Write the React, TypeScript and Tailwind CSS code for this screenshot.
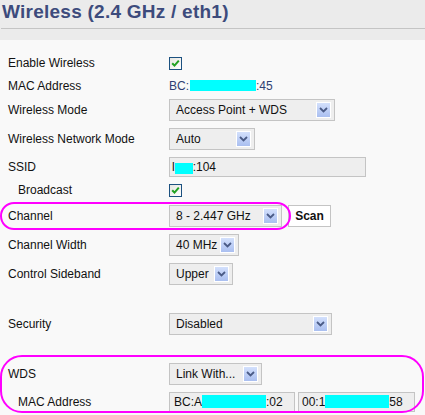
import React from "react";

const Arrow = () => (
    <span className="flex h-[16px] w-[15px] items-center justify-center border border-white bg-linear-to-b from-[#d3e0fc] to-[#aabff0]">
        <svg width="9" height="6" viewBox="0 0 9 6">
            <path d="M1 1 L4.5 4.5 L8 1" fill="none" stroke="#4a5b86" strokeWidth="1.8" />
        </svg>
    </span>
);

const Select = ({ value, className }: { value: string; className: string }) => (
    <div className={"flex h-[22px] items-center justify-between border border-[#c4c4c4] bg-[#eeeeee] pl-[6px] pr-[3px] " + className}>
        <span className="whitespace-nowrap">{value}</span>
        <Arrow />
    </div>
);

const Checkbox = () => (
    <span className="flex h-[13px] w-[13px] items-center justify-center border border-[#1c5180] bg-linear-to-br from-[#e6e6e0] to-[#ffffff]">
        <svg width="9" height="9" viewBox="0 0 9 9">
            <path d="M1.2 4.2 L3.5 6.6 L7.8 1.6" fill="none" stroke="#21a121" strokeWidth="2" />
        </svg>
    </span>
);

const Blot = ({ className }: { className: string }) => (
    <span className={"inline-block bg-[#00ffff] " + className} />
);

const Row = ({ label, indent, className, children }: { label: string; indent?: boolean; className: string; children?: React.ReactNode }) => (
    <div className={"flex items-center " + className}>
        <div className={"w-[169px] shrink-0 " + (indent ? "pl-[18px]" : "pl-[8px]")}>{label}</div>
        <div className="flex items-center gap-[6px]">{children}</div>
    </div>
);

export default function App() {
    return (
        <div className="w-[425px] h-[415px] overflow-hidden bg-[#f9f9f9] font-['Liberation_Sans',Arial,sans-serif] text-[12px] text-[#111]">
            <div className="bg-[#ebebeb]">
                <div className="h-[28px] pl-[2px] pt-[2px] text-[19px] leading-[19px] font-bold tracking-[0.25px] text-[#3d4b7c] whitespace-nowrap">
                    Wireless (2.4 GHz / eth1)
                </div>
                <div className="ml-[1px] h-[1px] bg-[#c4c4c4]" />
                <div className="h-[11px]" />
            </div>
            <div className="pt-[12px]">
                <Row label="Enable Wireless" className="h-[22px]"><Checkbox /></Row>
                <Row label="MAC Address" className="h-[23px]">
                    <span className="flex items-center text-[#2f3f72]">
                        BC:<Blot className="ml-[1px] h-[11px] w-[66px]" />:45
                    </span>
                </Row>
                <Row label="Wireless Mode" className="h-[26px]"><Select value="Access Point + WDS" className="w-[166px]" /></Row>
                <Row label="Wireless Network Mode" className="h-[32px]"><Select value="Auto" className="w-[86px]" /></Row>
                <Row label="SSID" className="h-[23px]">
                    <div className="flex h-[20px] w-[197px] items-center border border-[#c4c4c4] bg-[#eeeeee] pl-[2px]">
                        l<Blot className="mt-[3px] h-[11px] w-[18px]" />:104
                    </div>
                </Row>
                <Row label="Broadcast" indent className="h-[24px]"><Checkbox /></Row>
                <div className="relative">
                    <Row label="Channel" className="h-[28px]">
                        <Select value="8 - 2.447 GHz" className="w-[113px]" />
                        <div className="flex h-[22px] w-[43px] items-center justify-center border border-[#c4c4c4] bg-white font-bold">Scan</div>
                    </Row>
                    <span className="absolute left-0 top-0 h-[28px] w-[291px] rounded-[14px] border-2 border-[#ff00ff]" />
                </div>
                <Row label="Channel Width" className="h-[30px]"><Select value="40 MHz" className="w-[70px]" /></Row>
                <Row label="Control Sideband" className="h-[28px]"><Select value="Upper" className="w-[64px]" /></Row>
                <div className="h-[22px]" />
                <Row label="Security" className="h-[28px]"><Select value="Disabled" className="w-[163px]" /></Row>
                <div className="h-[22px]" />
                <div className="relative">
                    <Row label="WDS" className="h-[28px]"><Select value="Link With..." className="w-[93px]" /></Row>
                    <Row label="MAC Address" indent className="h-[27px]">
                        <div className="-mr-[3px] flex h-[20px] w-[126px] items-center border border-[#c4c4c4] bg-[#eeeeee] pl-[4px]">
                            BC:A<Blot className="h-[13px] w-[64px]" />:02
                        </div>
                        <div className="flex h-[20px] w-[117px] items-center border border-[#c4c4c4] bg-[#eeeeee] pl-[3px]">
                            00:1<Blot className="h-[13px] w-[64px]" />58
                        </div>
                    </Row>
                    <span className="absolute left-0 top-[-5px] h-[58px] w-[424px] rounded-[22px] border-2 border-[#ff00ff]" />
                </div>
            </div>
        </div>
    );
}
